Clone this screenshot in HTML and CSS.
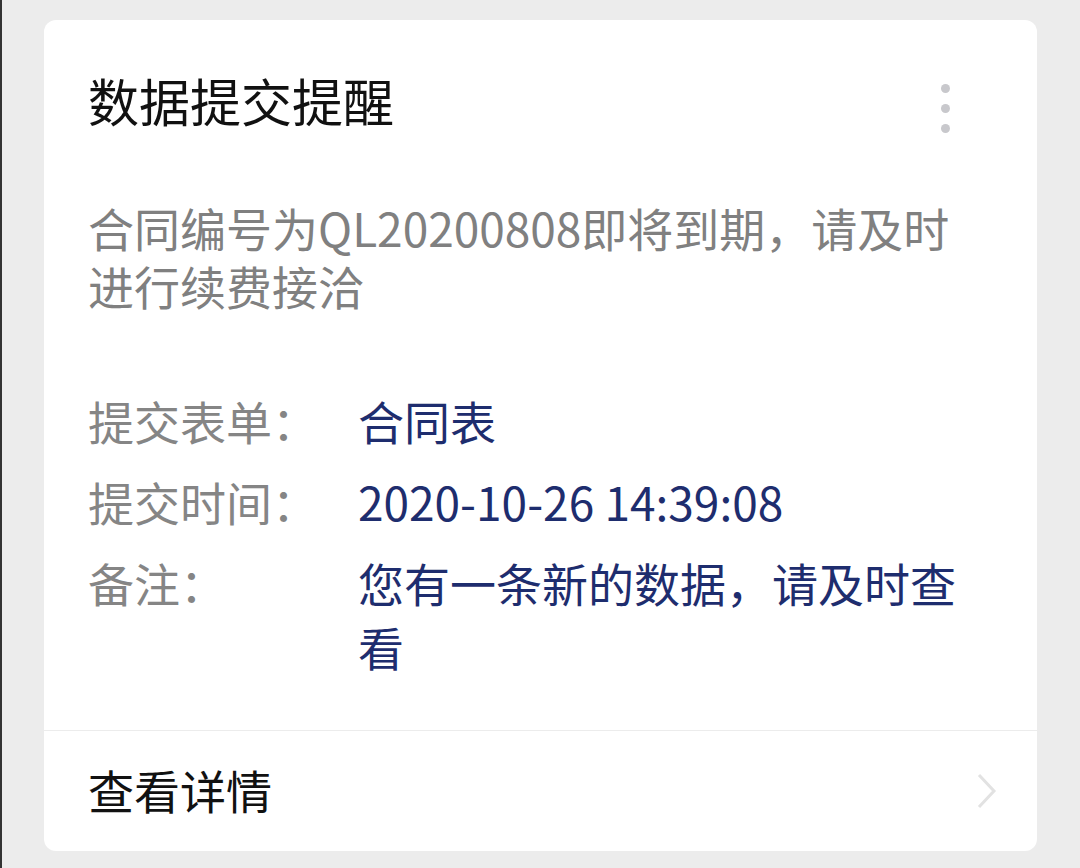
FILE: index.html
```html
<!DOCTYPE html>
<html lang="zh-CN">
<head>
    <meta charset="UTF-8">
    <meta name="viewport" content="width=device-width, initial-scale=1.0">
    <title>数据提交提醒</title>
    <link rel="stylesheet" href="styles.css">
</head>
<body>

    <div class="card">
        <div class="card-header">
            <div class="card-title">数据提交提醒</div>
            <div class="more-btn">
                <span class="dot"></span>
                <span class="dot"></span>
                <span class="dot"></span>
            </div>
        </div>

        <div class="card-desc">合同编号为QL20200808即将到期，请及时进行续费接洽</div>

        <div class="info-list">
            <div class="info-row">
                <div class="info-label">提交表单：</div>
                <div class="info-value">合同表</div>
            </div>
            <div class="info-row">
                <div class="info-label">提交时间：</div>
                <div class="info-value">2020-10-26 14:39:08</div>
            </div>
            <div class="info-row">
                <div class="info-label">备注：</div>
                <div class="info-value">您有一条新的数据，请及时查看</div>
            </div>
        </div>

        <div class="card-footer">
            <span>查看详情</span>
            <svg class="chevron" width="20" height="36" viewBox="0 0 20 36">
                <path d="M2 2 L17 18 L2 34" fill="none" stroke="#e2e2e2" stroke-width="3"/>
            </svg>
        </div>
    </div>

</body>
</html>
```

FILE: styles.css
```css
body {
    margin: 0;
    background: #ececec;
    border-left: 2px solid #333;
    height: 868px;
    box-sizing: border-box;
    padding: 20px 42px 0 42px;
    font-family: "Noto Sans CJK SC", "Noto Sans", sans-serif;
}
.card {
    background: #fff;
    border-radius: 12px;
    width: 993px;
    box-sizing: border-box;
}
.card-header {
    display: flex;
    justify-content: space-between;
    align-items: flex-start;
    height: 60px;
    padding: 50px 87px 0 44px;
}
.card-title {
    font-size: 51px;
    line-height: 60px;
    color: #111;
}
.more-btn {
    display: flex;
    flex-direction: column;
    gap: 11px;
    margin-top: 14px;
}
.dot {
    width: 9px;
    height: 9px;
    border-radius: 50%;
    background: #c8c8cc;
}
.card-desc {
    margin: 68px 44px 0 44px;
    font-size: 46px;
    line-height: 58px;
    color: #808080;
}
.info-list {
    display: flex;
    flex-direction: column;
    gap: 17px;
    padding: 74px 44px 52px 44px;
    border-bottom: 1px solid #ececec;
}
.info-row { display: flex; }
.info-label {
    width: 270px;
    flex-shrink: 0;
    font-size: 46px;
    line-height: 64px;
    color: #858585;
}
.info-value {
    flex: 1;
    font-size: 46px;
    line-height: 64px;
    color: #1e2d6e;
}
.card-footer {
    display: flex;
    justify-content: space-between;
    align-items: center;
    height: 120px;
    box-sizing: border-box;
    padding: 0 40px 4px 44px;
    font-size: 46px;
    color: #111;
}
.chevron { margin-top: 4px; }
```
